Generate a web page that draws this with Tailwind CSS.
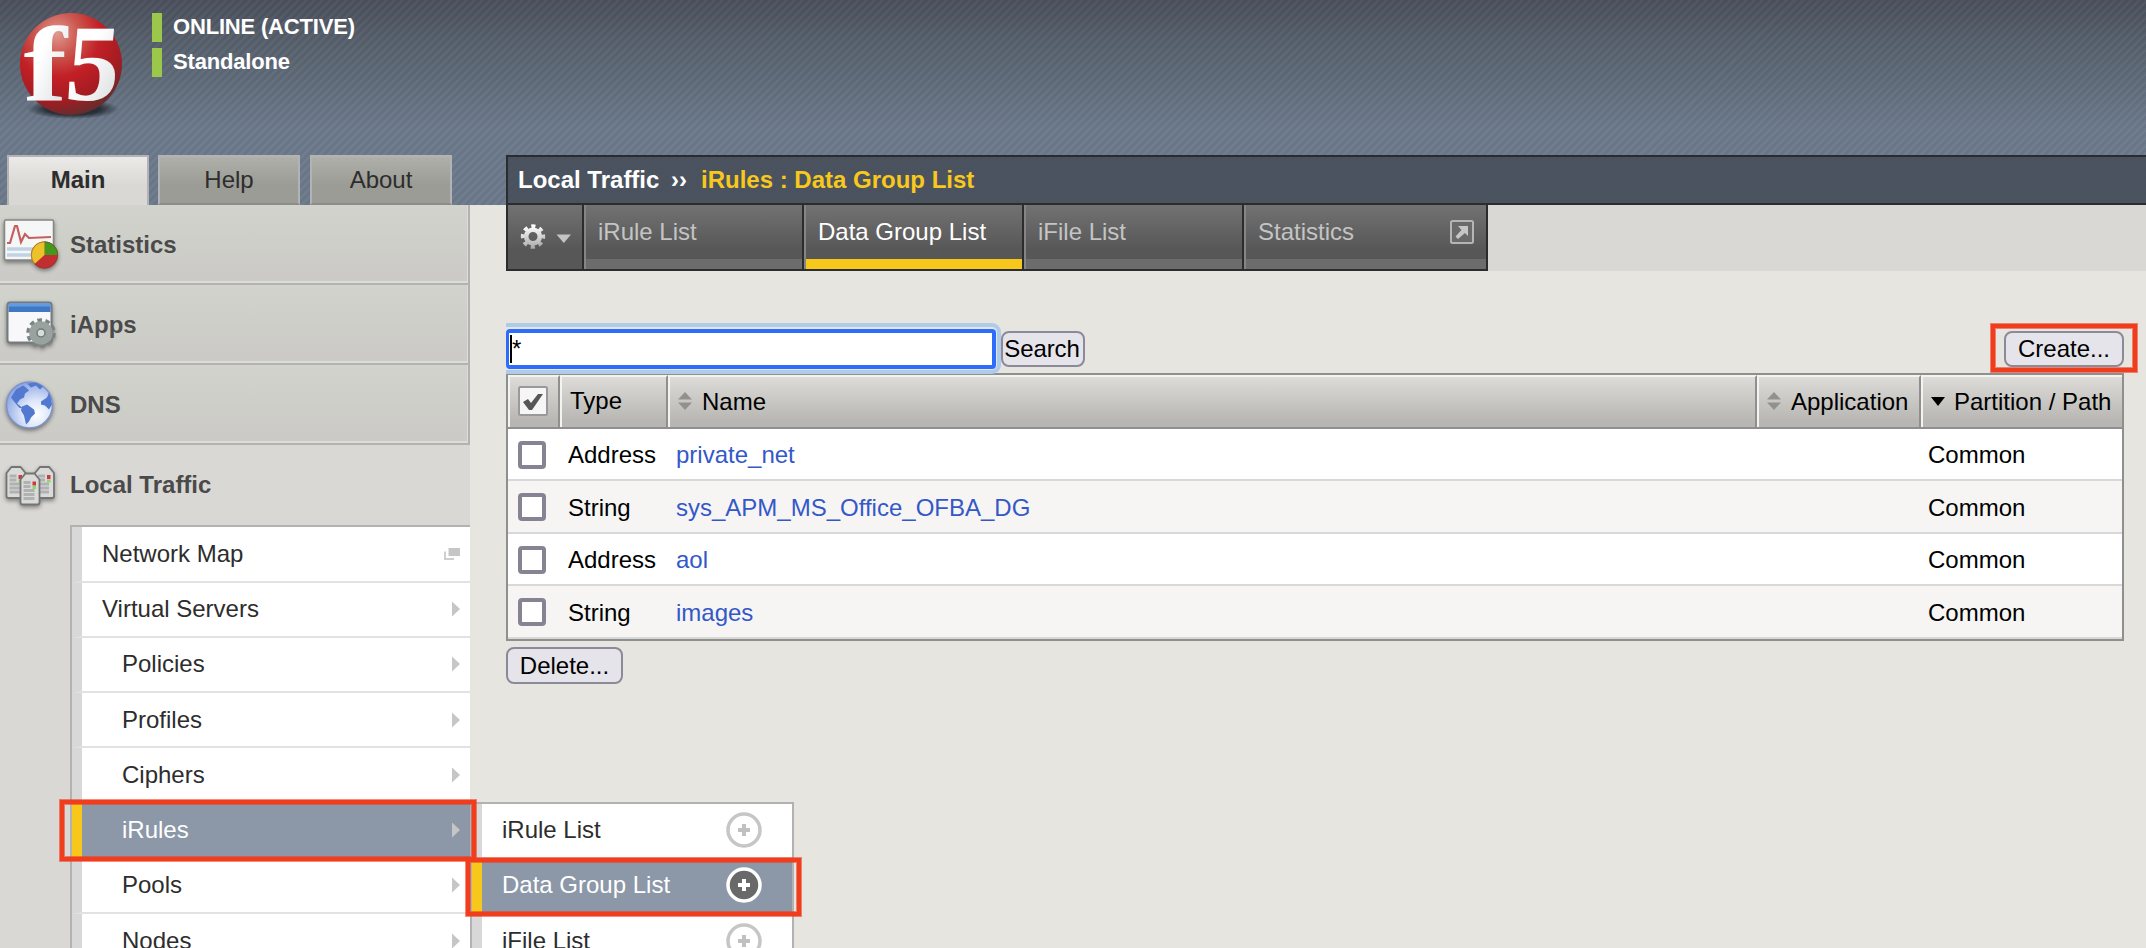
<!DOCTYPE html>
<html lang="en">
<head>
<meta charset="utf-8">
<title>BIG-IP - Data Group List</title>
<script src="https://cdn.jsdelivr.net/npm/@tailwindcss/browser@4"></script>
</head>
<body class="bg-[#e6e5e0]">
<div class="relative flex h-[948px] w-[2146px] flex-col overflow-hidden bg-[#e6e5e0] font-['Liberation_Sans',Arial,sans-serif] text-[24px] leading-none text-black">

  <!-- Banner -->
  <header class="flex h-[205px] shrink-0 bg-[repeating-linear-gradient(135deg,rgba(255,255,255,0.035)_0px,rgba(255,255,255,0.035)_2.83px,rgba(0,0,0,0.02)_2.83px,rgba(0,0,0,0.02)_5.66px),linear-gradient(to_bottom,#4a4f5b_0px,#58636f_55px,#6b788b_130px,#6b788b_205px)]">
    <div class="flex w-[470px] shrink-0 flex-col">
      <div class="flex h-[155px]">
        <svg class="ml-[10px] mt-[5px] h-[120px] w-[124px] shrink-0" viewBox="10 5 124 120">
          <defs>
            <radialGradient id="ball" cx="0.36" cy="0.2" r="0.85"><stop offset="0" stop-color="#e09a90"/><stop offset=".25" stop-color="#cc5850"/><stop offset=".5" stop-color="#c22026"/><stop offset=".78" stop-color="#a31c22"/><stop offset="1" stop-color="#5a3030"/></radialGradient>
            <linearGradient id="let" x1="0" y1="0" x2="1" y2="1"><stop offset="0.4" stop-color="#fff"/><stop offset="1" stop-color="#d4d8da"/></linearGradient>
            <radialGradient id="sh"><stop offset="0" stop-color="#1c2026"/><stop offset=".6" stop-color="#1c2026" stop-opacity=".8"/><stop offset="1" stop-color="#1c2026" stop-opacity="0"/></radialGradient>
          </defs>
          <ellipse cx="73" cy="109" rx="46" ry="10" fill="url(#sh)"/>
          <circle cx="71" cy="64" r="51" fill="url(#ball)"/>
          <g font-family="'Liberation Serif',serif" font-weight="bold" font-size="109" fill="url(#let)">
            <text transform="translate(23.500 99.500) scale(1.200 .98)" x="0" y="0">f</text>
            <text transform="translate(63.500 99.500) skewX(-5) scale(.98 1)" x="0" y="0">5</text>
          </g>
        </svg>
        <div class="ml-[18px] mt-[13px] flex flex-col gap-[6px] text-[22px] font-bold tracking-[-0.18px] text-white">
          <div class="h-[29px] border-l-[10px] border-[#9bc84a] pl-[11px] leading-[28px]">ONLINE (ACTIVE)</div>
          <div class="h-[29px] border-l-[10px] border-[#9bc84a] pl-[11px] leading-[28px]">Standalone</div>
        </div>
      </div>
      <nav class="flex h-[50px] pl-[7px] text-[#2d2d2d]">
        <div class="mr-[9px] w-[142px] border-2 border-b-0 border-[#b3b2b4] bg-linear-to-b from-[#ebeae8] to-[#d9d8d4] to-60% text-center font-bold leading-[46px]">Main</div>
        <div class="mr-[10px] w-[142px] border-2 border-[#b3b2b4] border-b-[#8b8b87] bg-linear-to-b from-[#afb0aa] to-[#9b9c95] to-60% text-center leading-[46px]">Help</div>
        <div class="w-[142px] border-2 border-[#b3b2b4] border-b-[#8b8b87] bg-linear-to-b from-[#afb0aa] to-[#9b9c95] to-60% text-center leading-[46px]">About</div>
      </nav>
    </div>
    <div class="ml-9 mt-[155px] flex h-[50px] flex-1 border-2 border-r-0 border-[#2b2c2e] bg-[repeating-linear-gradient(135deg,#4b515e_0px,#4b515e_2.83px,#49545f_2.83px,#49545f_5.66px)] pl-[10px] font-bold leading-[45px] text-white">
      <span class="w-[153px]">Local Traffic</span><span class="w-[30px]">››</span><span class="text-[#f9c81c]">iRules : Data Group List</span>
    </div>
  </header>

  <div class="flex flex-1">
    <!-- Sidebar -->
    <aside class="flex h-[743px] w-[470px] shrink-0 flex-col overflow-hidden bg-[#d9d8d4] font-bold text-[#4a4a4a]">
      <div class="h-20 border-b-2 border-r-2 border-[#b3b2b3] bg-linear-to-b from-[#d2d3cd] to-[#cbcac6]">
        <div class="flex h-[78px] items-center border-b-2 border-r border-[#dddcd9] pt-1">
          <svg class="h-[70px] w-[70px] shrink-0" viewBox="0 212 70 70">
            <g style="filter:drop-shadow(0 2px 2px rgb(0 0 0 / .45))"><rect x="4.500" y="222" width="49" height="40" rx="1.500" fill="#f5f6f6" stroke="#858784" stroke-width="1.500"/>
            <path d="M7 251H52M7 257H40" stroke="#bfd3e5" stroke-width="3.500"/><path d="M7 245h3l5-17h2l4 16 4-8 4 4 22-1" fill="none" stroke="#c4605f" stroke-width="2.200"/>
            <circle cx="44.500" cy="257" r="13.500" fill="#c22d32"/><path d="M44.500 257V243.500A13.500 13.500 0 0 1 58 257Z" fill="#43991b"/><path d="M44.500 257V243.500A13.500 13.500 0 0 0 34.500 266Z" fill="#ecc22a"/><circle cx="44.500" cy="257" r="13.200" fill="none" stroke="#7a3c22" stroke-opacity=".5"/></g>
          </svg>Statistics</div>
      </div>
      <div class="h-20 border-b-2 border-r-2 border-[#b3b2b3] bg-linear-to-b from-[#d2d3cd] to-[#cbcac6]">
        <div class="flex h-[78px] items-center border-b-2 border-r border-[#dddcd9] pt-1">
          <svg class="h-[70px] w-[70px] shrink-0" viewBox="0 291 70 70">
            <g style="filter:drop-shadow(0 2px 2px rgb(0 0 0 / .45))"><rect x="7.500" y="303.500" width="44" height="40" rx="2.500" fill="#f8f8fb" stroke="#747a80" stroke-width="2"/><path d="M8.500 304.500h42v8.500h-42z" fill="#3f78c4"/><path d="M8.500 304.500h42v3h-42z" fill="#649be0"/>
            <circle cx="41" cy="334" r="12.500" fill="none" stroke="#7b8483" stroke-width="4.500" stroke-dasharray="4.500 3.354"/><circle cx="41" cy="334" r="8" fill="none" stroke="#99a29f" stroke-width="7.500"/><circle cx="41" cy="334" r="4" fill="#d8dcdb" stroke="#6e7776" stroke-width="1.500"/></g>
          </svg>iApps</div>
      </div>
      <div class="h-20 border-b-2 border-r-2 border-[#b3b2b3] bg-linear-to-b from-[#d2d3cd] to-[#cbcac6]">
        <div class="flex h-[78px] items-center border-b-2 border-r border-[#dddcd9] pt-1">
          <svg class="h-[70px] w-[70px] shrink-0" viewBox="0 370.500 70 70">
            <defs><radialGradient id="gl" cx=".65" cy=".7" r=".7"><stop offset="0" stop-color="#fff"/><stop offset=".45" stop-color="#dbe5f9"/><stop offset="1" stop-color="#8fa9e4"/></radialGradient></defs>
            <g style="filter:drop-shadow(0 2px 2px rgb(0 0 0 / .45))"><circle cx="29.500" cy="405.500" r="23" fill="url(#gl)" stroke="#7d93cc" stroke-width="1.500"/>
            <path d="M11 398l5-8 7-4 3 2 3 3-4 3-1 4-4 2-3 4 5 4 2 2-5-2-5-6zM27 384l9-1 7 4-3 3-4-4-5 2zM22 407l5-2 7 5 1 4-4 4-2 4-3 3-2-9-3-5zM41 402l6-4 2-5 2 6 1 6-3 5-4-4-4-1z" fill="#5378d0"/></g>
          </svg>DNS</div>
      </div>
      <div class="flex h-20 shrink-0 items-center">
        <svg class="h-[70px] w-[70px] shrink-0" viewBox="0 450 70 70">
          <defs><g id="srv"><path d="M0 6 5 0h9l5 6v23q0 2-2 2H2q-2 0-2-2z" fill="#dadad8" stroke="#747673" stroke-width="1.800"/><path d="M3 9h7M3 13h7M3 17h11M3 21h11M3 25h11" stroke="#b0b2b1" stroke-width="3"/><path d="M12 8h3.500v4H12z" fill="#cc3a40"/><path d="M12 12.500h3.500v3H12z" fill="#8bd967"/></g></defs>
          <g style="filter:drop-shadow(0 2px 2px rgb(0 0 0 / .4))"><use href="#srv" x="6.500" y="467"/><use href="#srv" x="35" y="467"/><use href="#srv" x="20.500" y="473.500"/></g>
        </svg>Local Traffic
      </div>
      <div class="ml-[70px] flex flex-col border-l-2 border-t-2 border-[#b3b2b3] font-normal text-[#2d2d2d]">
        <div class="flex h-14 items-center justify-between border-b-2 border-l-[10px] border-b-[#e2e2e2] border-l-[#d8d8d8] bg-white pl-5 pr-[10px]">Network Map
          <svg class="h-[14px] w-4" viewBox="0 0 16 14"><path d="M4.500 1H16v8H4.500z" fill="#c6c6c6"/><path d="M1 4.500V12H10" fill="none" stroke="#cfcfcf" stroke-width="2"/></svg></div>
        <div class="flex h-[55px] items-center justify-between border-b-2 border-l-[10px] border-b-[#e2e2e2] border-l-[#d8d8d8] bg-white pb-px pl-5 pr-[10px]">Virtual Servers<svg class="h-4 w-2" viewBox="0 0 8 16"><path d="M0 .5 8 8 0 15.500z" fill="#c6c6c6"/></svg></div>
        <div class="flex h-[55px] items-center justify-between border-b-2 border-l-[10px] border-b-[#e2e2e2] border-l-[#d8d8d8] bg-white pb-px pl-10 pr-[10px]">Policies<svg class="h-4 w-2" viewBox="0 0 8 16"><path d="M0 .5 8 8 0 15.500z" fill="#c6c6c6"/></svg></div>
        <div class="flex h-[55px] items-center justify-between border-b-2 border-l-[10px] border-b-[#e2e2e2] border-l-[#d8d8d8] bg-white pl-10 pr-[10px]">Profiles<svg class="h-4 w-2" viewBox="0 0 8 16"><path d="M0 .5 8 8 0 15.500z" fill="#c6c6c6"/></svg></div>
        <div class="flex h-[55px] items-center justify-between border-b-2 border-l-[10px] border-b-[#e2e2e2] border-l-[#d8d8d8] bg-white pl-10 pr-[10px]">Ciphers<svg class="h-4 w-2" viewBox="0 0 8 16"><path d="M0 .5 8 8 0 15.500z" fill="#c6c6c6"/></svg></div>
        <div class="flex h-14 items-center justify-between border-b-2 border-l-[10px] border-b-[#e2e2e2] border-l-[#f7c71b] bg-[#8c97a8] pl-10 pr-[10px] text-white">iRules<svg class="h-4 w-2" viewBox="0 0 8 16"><path d="M0 .5 8 8 0 15.500z" fill="#c6c6c6"/></svg></div>
        <div class="flex h-[55px] items-center justify-between border-b-2 border-l-[10px] border-b-[#e2e2e2] border-l-[#d8d8d8] bg-white pb-[2px] pl-10 pr-[10px]">Pools<svg class="h-4 w-2" viewBox="0 0 8 16"><path d="M0 .5 8 8 0 15.500z" fill="#c6c6c6"/></svg></div>
        <div class="flex h-[55px] items-center justify-between border-b-2 border-l-[10px] border-b-[#e2e2e2] border-l-[#d8d8d8] bg-white pl-10 pr-[10px]">Nodes<svg class="h-4 w-2" viewBox="0 0 8 16"><path d="M0 .5 8 8 0 15.500z" fill="#c6c6c6"/></svg></div>
      </div>
    </aside>

    <!-- Content -->
    <main class="flex-1 pl-9">
      <div class="flex h-[66px] bg-[#d9d8d4]">
        <div class="flex w-[982px] border-x-2 border-b-2 border-[#2b2c2e] bg-linear-to-b from-[#727272] to-[#575757] to-70% leading-[53px] text-[#c4c4c4]">
          <div class="flex w-[76px] items-start border-r-2 border-[#2b2c2e] pl-[12px] pt-[18px]">
            <svg class="h-7 w-[56px]" viewBox="0 0 56 28"><defs><linearGradient id="gr" x1="0" y1="0" x2="0" y2="28" gradientUnits="userSpaceOnUse"><stop offset=".1" stop-color="#fff"/><stop offset=".9" stop-color="#a8a8a8"/></linearGradient></defs>
              <circle cx="13" cy="13.500" r="10" fill="none" stroke="url(#gr)" stroke-width="4.400" stroke-dasharray="3.930 3.924" transform="rotate(-11 13 13.500)"/><circle cx="13" cy="13.500" r="6.800" fill="none" stroke="url(#gr)" stroke-width="4.600"/>
              <path d="M36.500 11.500h14.500l-7.200 8.500z" fill="#c4c4c4"/></svg>
          </div>
          <div class="flex w-[220px] flex-col border-l-2 border-r-2 border-l-[#858585] border-r-[#2b2c2e]"><div class="h-[54px] pl-3">iRule List</div><div class="h-[10px] bg-[#6c6c6c]"></div></div>
          <div class="flex w-[220px] flex-col border-l-2 border-r-2 border-l-[#858585] border-r-[#2b2c2e]"><div class="h-[54px] pl-3 text-white">Data Group List</div><div class="h-[10px] bg-[#f7c71b]"></div></div>
          <div class="flex w-[220px] flex-col border-l-2 border-r-2 border-l-[#858585] border-r-[#2b2c2e]"><div class="h-[54px] pl-3">iFile List</div><div class="h-[10px] bg-[#6c6c6c]"></div></div>
          <div class="flex flex-1 flex-col border-l-2 border-l-[#858585]"><div class="flex h-[54px] justify-between pl-3 pr-3">Statistics
            <svg class="mt-[15px] size-6" viewBox="0 0 24 24"><rect x="1" y="1" width="22" height="22" rx="1.500" fill="#6a6a6a" stroke="#b5b5b5" stroke-width="2"/><path d="M8 6h10v10l-3-3L8 19l-2.500-2.500L11.500 10z" fill="#c6c6c6"/></svg></div><div class="h-[10px] bg-[#6c6c6c]"></div></div>
        </div>
      </div>

      <div class="w-[1618px] pt-[60px]">
        <div class="relative flex h-9">
          <!-- focused search field -->
          <div class="absolute -top-2 left-0 z-10 h-[51px] w-[495px] rounded-r-[9px] border-4 border-l-0 border-[#aecbea]">
            <div class="mt-[2px] flex h-10 w-[490px] rounded-[4px] border-4 border-l-[3px] border-[#2e6dfb] bg-white pl-px pt-[2px]"><span class="h-7 w-[2px] bg-black"></span><span class="leading-[27px]">*</span></div>
          </div>
          <button class="ml-[495px] h-9 w-[84px] rounded-lg border-2 border-[#8c8a99] bg-[#e5e4ea] text-center leading-[29px] tracking-[-0.1px]"><span class="relative -top-px -left-px">Search</span></button>
          <button class="ml-auto h-9 w-[120px] rounded-lg border-2 border-[#8c8a99] bg-[#e5e4ea] text-center leading-[29px]"><span class="relative -top-px">Create...</span></button>
        </div>

        <div class="mt-[6px] flex h-[268px] flex-col border-2 border-[#8f8f8d]">
          <div class="flex h-[54px] border-b-2 border-[#8f8f8d] bg-linear-to-b from-[#dcdbd7] from-5% to-[#b7b6b2] to-90% leading-[49px]">
            <div class="w-[52px] border-l-2 border-r-2 border-t-2 border-l-[#f3f3f1] border-r-[#8f8f8d] border-t-[#f3f3f1] pl-2 pt-[9px]">
              <svg class="h-[30px] w-[30px]" viewBox="0 0 30 30"><rect x="1" y="1" width="28" height="28" rx="1.500" fill="#f6f6f6" stroke="#999" stroke-width="2"/><path d="M5 16l5-3 3 4L20 8h5L14 24h-3z" fill="#575757"/></svg></div>
            <div class="w-[108px] border-l-2 border-r-2 border-t-2 border-l-[#f3f3f1] border-r-[#8f8f8d] border-t-[#f3f3f1] pl-2 leading-[47px]">Type</div>
            <div class="flex flex-1 border-l-2 border-r-2 border-t-2 border-l-[#f3f3f1] border-r-[#8f8f8d] border-t-[#f3f3f1] pl-2"><svg class="mr-[10px] mt-[15px] h-[18px] w-[14px]" viewBox="0 0 14 18"><path d="M0 7.500 7 0l7 7.500zM0 10.500h14L7 18z" fill="#919191"/></svg>Name</div>
            <div class="flex w-[164px] border-l-2 border-r-2 border-t-2 border-l-[#f3f3f1] border-r-[#8f8f8d] border-t-[#f3f3f1] pl-2"><svg class="mr-[10px] mt-[15px] h-[18px] w-[14px]" viewBox="0 0 14 18"><path d="M0 7.500 7 0l7 7.500zM0 10.500h14L7 18z" fill="#919191"/></svg>Application</div>
            <div class="flex w-[201px] border-l-2 border-t-2 border-[#f3f3f1] pl-2"><svg class="mr-[9px] mt-[20px] h-[9px] w-[14px]" viewBox="0 0 14 9"><path d="M0 0h14L7 9z"/></svg>Partition / Path</div>
          </div>
          <div class="flex h-[52px] border-b-2 border-[#d8d8d8] bg-white leading-[52px]">
            <div class="w-[60px] pl-[10px] pt-3"><div class="size-7 rounded-[4px] border-4 border-[#868493] bg-white"></div></div><div class="w-[108px]">Address</div><div class="flex-1 text-[#3458c8]">private_net</div><div class="w-[194px]">Common</div></div>
          <div class="flex h-[53px] border-b-2 border-[#d8d8d8] bg-[#f6f5f3] leading-[53px]">
            <div class="w-[60px] pl-[10px] pt-3"><div class="size-7 rounded-[4px] border-4 border-[#868493] bg-white"></div></div><div class="w-[108px]">String</div><div class="flex-1 text-[#3458c8]">sys_APM_MS_Office_OFBA_DG</div><div class="w-[194px]">Common</div></div>
          <div class="flex h-[52px] border-b-2 border-[#d8d8d8] bg-white leading-[52px]">
            <div class="w-[60px] pl-[10px] pt-3"><div class="size-7 rounded-[4px] border-4 border-[#868493] bg-white"></div></div><div class="w-[108px]">Address</div><div class="flex-1 text-[#3458c8]">aol</div><div class="w-[194px]">Common</div></div>
          <div class="flex h-[53px] border-b-2 border-[#d8d8d8] bg-[#f6f5f3] leading-[53px]">
            <div class="w-[60px] pl-[10px] pt-3"><div class="size-7 rounded-[4px] border-4 border-[#868493] bg-white"></div></div><div class="w-[108px]">String</div><div class="flex-1 text-[#3458c8]">images</div><div class="w-[194px]">Common</div></div>
        </div>
        <button class="mt-[6px] block h-[37px] w-[117px] rounded-lg border-2 border-[#8c8a99] bg-[#e5e4ea] text-center leading-[33px]">Delete...</button>
      </div>
    </main>
  </div>

  <!-- Fly-out menu of iRules -->
  <div class="absolute left-[470px] top-[802px] w-[324px] border-2 border-b-0 border-[#b3b2b3] text-[#2d2d2d]">
    <div class="flex h-[55px] items-center justify-between border-b-2 border-l-[10px] border-b-[#e2e2e2] border-l-[#d8d8d8] bg-white pb-[2px] pl-5 pr-[30px]">iRule List
      <svg class="size-9" viewBox="0 0 36 36"><circle cx="18" cy="18" r="16" fill="#fff" stroke="#c6c6c6" stroke-width="3.500"/><path d="M18 12v12M12 18h12" stroke="#c0c0c0" stroke-width="4"/></svg></div>
    <div class="flex h-14 items-center justify-between border-b-2 border-l-[10px] border-b-[#e2e2e2] border-l-[#f7c71b] bg-[#8c97a8] pb-[2px] pl-5 pr-[30px] text-white">Data Group List
      <svg class="size-9" viewBox="0 0 36 36"><circle cx="18" cy="18" r="16" fill="#696969" stroke="#fff" stroke-width="3.500"/><path d="M18 12v12M12 18h12" stroke="#fff" stroke-width="4"/></svg></div>
    <div class="flex h-[55px] items-center justify-between border-b-2 border-l-[10px] border-b-[#e2e2e2] border-l-[#d8d8d8] bg-white pb-px pl-5 pr-[30px]">iFile List
      <svg class="size-9" viewBox="0 0 36 36"><circle cx="18" cy="18" r="16" fill="#fff" stroke="#c6c6c6" stroke-width="3.500"/><path d="M18 12v12M12 18h12" stroke="#c0c0c0" stroke-width="4"/></svg></div>
  </div>

  <!-- Callout boxes -->
  <div class="absolute left-[60px] top-[800px] h-[61px] w-[416px] border-[4px] border-[#ef3d1e] shadow-[0_0_0_1px_#ef3d1e99,inset_0_0_0_1px_#ef3d1e99]"></div>
  <div class="absolute left-[466px] top-[858px] h-[58px] w-[335px] border-[4px] border-[#ef3d1e] shadow-[0_0_0_1px_#ef3d1e99,inset_0_0_0_1px_#ef3d1e99]"></div>
  <div class="absolute left-[1991px] top-[324px] z-20 h-[48px] w-[146px] border-[4px] border-[#ef3d1e] shadow-[0_0_0_1px_#ef3d1e99,inset_0_0_0_1px_#ef3d1e99]"></div>
</div>
</body>
</html>
